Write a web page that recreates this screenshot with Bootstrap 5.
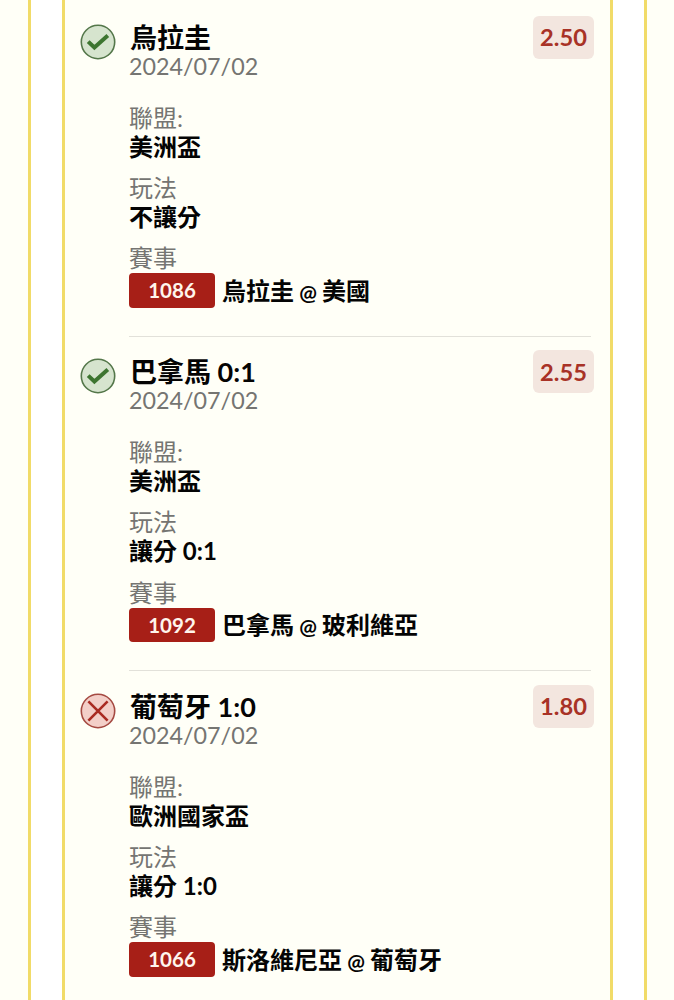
<!DOCTYPE html>
<html lang="zh-Hant">
<head>
<meta charset="utf-8">
<meta name="viewport" content="width=device-width, initial-scale=1">
<title>投注明細</title>
<link href="https://cdn.jsdelivr.net/npm/bootstrap@5.3.0/dist/css/bootstrap.min.css" rel="stylesheet">
<style>
  body { background: #fffff7; font-family: Lato, "Noto Sans CJK TC", sans-serif; color: #040404; height: 1000px; overflow: hidden; }
  .slip-gutter { height: 1000px; margin: 0 27px 0 28px; background: #fff; border: solid #f1db68; border-width: 0 3px; padding: 0 31px; }
  .slip { height: 100%; background: #fffff7; border: solid #f1db68; border-width: 0 3px; padding: 1.5px 16px 0 15px; }
  .bet { height: 334.5px; padding-top: 21px; }
  .status { width: 36px; height: 36px; margin: 1px 13px 0 0; }
  .bet-body { height: 314px; }
  .bet-rule { border-bottom: 1.5px solid #e2e1da; margin-right: 3px; width: calc(100% - 3px); }
  .bet-rule:last-child { min-width: 0; }
  .team { font-size: 27px; line-height: 30px; font-weight: 700; white-space: nowrap; padding-left: 1px; }
  .date { font-size: 23.3px; line-height: 26px; color: #757572; }
  .term { font-size: 24px; line-height: 29px; height: 29px; color: #757572; }
  .value { font-size: 24px; line-height: 29px; height: 29px; font-weight: 700; white-space: nowrap; }
  .versus { font-size: 21px; margin: 0 -.7px; }
  .field { height: 70.3px; }
  .fields { margin-top: 24px; }
  .odds { width: 61px; height: 43px; margin: -7px -3px 0 0; padding-top: 2px; border-radius: 6px; background: #f3e6df; color: #a83226; font-size: 23.7px; font-weight: 700; }
  .match-row { margin-top: 1px; }
  .match-no { width: 86px; height: 34.5px; padding-top: 1px; border-radius: 4px; background: #a71f17; color: #fff5ec; font-size: 20.5px; font-weight: 700; margin-right: 7px; }
</style>
</head>
<body>
<main class="slip-gutter">
  <div class="slip">
    <article class="bet d-flex align-items-start">
      <svg class="status flex-shrink-0" viewBox="0 0 36 36" fill="none"><circle cx="18" cy="18" r="16.7" fill="#d6e4ce" stroke="#54774a" stroke-width="1.6"/><path d="M8.2 17.6l6.2 5.9L27.8 11.6" stroke="#3d7530" stroke-width="4"/></svg>
      <div class="bet-body bet-rule">
        <header class="d-flex justify-content-between">
          <div><div class="team">烏拉圭</div><div class="date">2024/07/02</div></div>
          <div class="odds d-flex align-items-center justify-content-center">2.50</div>
        </header>
        <div class="fields">
          <div class="field"><div class="term">聯盟:</div><div class="value">美洲盃</div></div>
          <div class="field"><div class="term">玩法</div><div class="value">不讓分</div></div>
          <div><div class="term">賽事</div><div class="match-row d-flex align-items-center"><span class="match-no d-flex align-items-center justify-content-center">1086</span><span class="value">烏拉圭 <span class="versus">@</span> 美國</span></div></div>
        </div>
      </div>
    </article>
    <article class="bet d-flex align-items-start">
      <svg class="status flex-shrink-0" viewBox="0 0 36 36" fill="none"><circle cx="18" cy="18" r="16.7" fill="#d6e4ce" stroke="#54774a" stroke-width="1.6"/><path d="M8.2 17.6l6.2 5.9L27.8 11.6" stroke="#3d7530" stroke-width="4"/></svg>
      <div class="bet-body bet-rule">
        <header class="d-flex justify-content-between">
          <div><div class="team">巴拿馬 0:1</div><div class="date">2024/07/02</div></div>
          <div class="odds d-flex align-items-center justify-content-center">2.55</div>
        </header>
        <div class="fields">
          <div class="field"><div class="term">聯盟:</div><div class="value">美洲盃</div></div>
          <div class="field"><div class="term">玩法</div><div class="value">讓分 0:1</div></div>
          <div><div class="term">賽事</div><div class="match-row d-flex align-items-center"><span class="match-no d-flex align-items-center justify-content-center">1092</span><span class="value">巴拿馬 <span class="versus">@</span> 玻利維亞</span></div></div>
        </div>
      </div>
    </article>
    <article class="bet d-flex align-items-start">
      <svg class="status flex-shrink-0" viewBox="0 0 36 36" fill="none"><circle cx="18" cy="18" r="16.7" fill="#f3cfc8" stroke="#a54a42" stroke-width="1.6"/><path d="M8.4 8.4l19.2 19.2M27.6 8.4L8.4 27.6" stroke="#a92b22" stroke-width="2.6"/></svg>
      <div class="bet-body bet-rule">
        <header class="d-flex justify-content-between">
          <div><div class="team">葡萄牙 1:0</div><div class="date">2024/07/02</div></div>
          <div class="odds d-flex align-items-center justify-content-center">1.80</div>
        </header>
        <div class="fields">
          <div class="field"><div class="term">聯盟:</div><div class="value">歐洲國家盃</div></div>
          <div class="field"><div class="term">玩法</div><div class="value">讓分 1:0</div></div>
          <div><div class="term">賽事</div><div class="match-row d-flex align-items-center"><span class="match-no d-flex align-items-center justify-content-center">1066</span><span class="value">斯洛維尼亞 <span class="versus">@</span> 葡萄牙</span></div></div>
        </div>
      </div>
    </article>
  </div>
</main>
<script src="https://cdn.jsdelivr.net/npm/bootstrap@5.3.0/dist/js/bootstrap.bundle.min.js"></script>
</body>
</html>
